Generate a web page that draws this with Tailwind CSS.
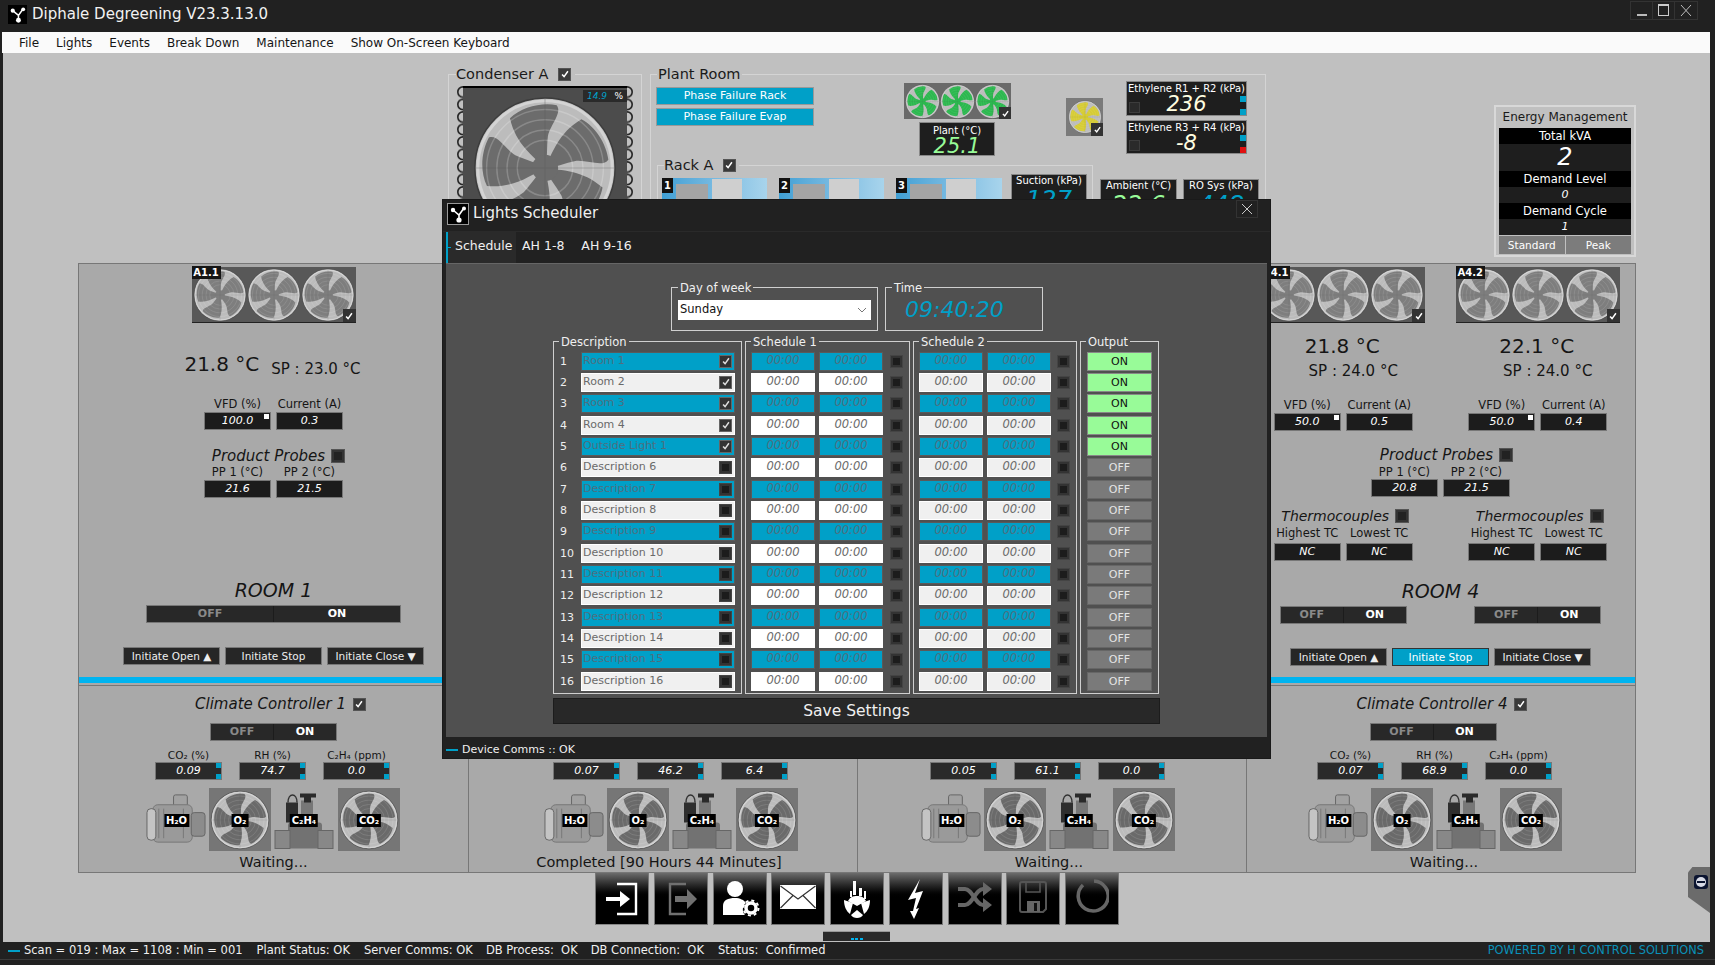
<!DOCTYPE html>
<html lang="en">
<head>
<meta charset="utf-8">
<title>Diphale Degreening</title>
<script src="https://cdn.jsdelivr.net/npm/@tailwindcss/browser@4"></script>
</head>
<body class="m-0 bg-[#212121] font-['DejaVu_Sans',sans-serif] overflow-hidden">

<!-- shared icons -->
<svg class="hidden">
  <symbol id="chk" viewBox="0 0 12 12"><path d="M2.5 6.5l2.4 2.6 4.6-6.4" fill="none" stroke="currentColor" stroke-width="1.8"/></symbol>
  <symbol id="logo" viewBox="0 0 20 20">
    <rect width="20" height="20" fill="#000"/>
    <path d="M5 6l6 5 5-7M11 11v5" stroke="#fff" stroke-width="1.6" fill="none"/>
    <circle cx="5" cy="6" r="2.2" fill="#fff"/><circle cx="16" cy="4.5" r="2" fill="#fff"/><circle cx="11" cy="16" r="2.6" fill="#fff"/>
  </symbol>
  <path id="blade" d="M50 50C42 42 30 34 26 16 34 8 48 5 58 7 62 12 54 20 52 28 51 36 52 44 50 50Z"/>
  <symbol id="fan" viewBox="0 0 100 100">
    <circle cx="50" cy="50" r="48" fill="#bcbcbc" stroke="#3c3c3c" stroke-width="1"/>
    <g fill="currentColor">
      <use href="#blade"/>
      <use href="#blade" transform="rotate(72 50 50)"/>
      <use href="#blade" transform="rotate(144 50 50)"/>
      <use href="#blade" transform="rotate(216 50 50)"/>
      <use href="#blade" transform="rotate(288 50 50)"/>
      <circle cx="50" cy="50" r="9"/>
    </g>
    <g fill="none" stroke="#fff" stroke-opacity=".2" stroke-width="1">
      <circle cx="50" cy="50" r="40"/><circle cx="50" cy="50" r="33"/><circle cx="50" cy="50" r="26"/><circle cx="50" cy="50" r="19"/>
    </g>
    <circle cx="50" cy="50" r="46" fill="none" stroke="#d4d4d4" stroke-width="2"/>
    <path d="M50 2V98M2 50H98" stroke="#555" stroke-opacity=".3" stroke-width=".8"/>
  </symbol>
  <symbol id="motor" viewBox="0 0 62 62">
    <rect x="28" y="6" width="14" height="12" rx="2" fill="#a2a2a2" stroke="#666"/>
    <rect x="7" y="16" width="40" height="38" rx="5" fill="#9a9a9a" stroke="#777"/>
    <rect x="1" y="20" width="9" height="32" rx="4" fill="#c4c4c4" stroke="#666"/>
    <rect x="46" y="24" width="14" height="24" rx="3" fill="#8c8c8c" stroke="#666"/>
    <path d="M13 20V50M18 20V50M38 20V50" stroke="#777"/>
  </symbol>
  <symbol id="valve" viewBox="0 0 60 62">
    <rect x="12" y="14" width="12" height="20" fill="#2e2e2e"/>
    <path d="M14 14c0-10 9-10 9 0" fill="none" stroke="#333" stroke-width="1.5"/>
    <rect x="27" y="12" width="12" height="24" fill="#777"/>
    <path d="M26 5H42V9H37V14H30V9H26Z" fill="#2a2a2a"/>
    <rect x="14" y="34" width="34" height="26" rx="3" fill="#727272"/>
    <rect x="1" y="42" width="15" height="18" fill="#888" stroke="#666"/>
    <rect x="44" y="42" width="15" height="18" fill="#888" stroke="#666"/>
  </symbol>
</svg>

<div class="w-[1715px] h-[965px] flex flex-col relative overflow-hidden">

  <!-- title bar -->
  <header class="h-[32px] flex items-center bg-[#212121] text-white relative">
    <svg class="w-[19px] h-[19px] ml-[8px] -mt-[3px]"><use href="#logo"/></svg>
    <span class="ml-[5px] -mt-[3px] text-[15px] leading-none text-[#f2f2f2]">Diphale Degreening V23.3.13.0</span>
    <div class="ml-auto mr-[17px] -mt-[12px] flex h-[19px] border border-[#333] text-[#bbb]">
      <span class="w-[22px] flex items-end justify-center pb-[3px] border-r border-[#333]"><span class="w-[10px] h-[2px] bg-[#bbb]"></span></span>
      <span class="w-[22px] flex items-center justify-center border-r border-[#333]"><span class="w-[11px] h-[12px] border border-[#ccc] border-t-2"></span></span>
      <span class="w-[22px] flex items-center justify-center">
        <svg class="w-[12px] h-[13px]" viewBox="0 0 12 13"><path d="M1 1L11 12M11 1L1 12" stroke="#bbb"/></svg>
      </span>
    </div>
  </header>

  <!-- menu -->
  <nav class="h-[21px] mx-[2px] mr-[5px] bg-[#fafafa] flex items-center gap-[17px] pl-[17px] text-[12px] text-[#151515]">
    <span>File</span><span>Lights</span><span>Events</span><span>Break Down</span><span>Maintenance</span><span>Show On-Screen Keyboard</span>
  </nav>

  <!-- main area -->
  <main class="flex-1 ml-[3px] mr-[5px] bg-[#c0c0c0] relative flex flex-col">

    <!-- top: condenser, plant room, energy -->
    <section class="h-[210px] flex items-start pt-[14px] pl-[445px] text-[#1a1a1a]">
      <fieldset class="w-[194px] h-[186px] border border-[#d4d4d4]">
        <legend class="ml-[7px] pr-[4px] flex items-center gap-[10px] text-[14.5px] leading-[14px]">
          Condenser A
          <span class="w-[13px] h-[13px] flex items-center justify-center bg-[#3a3a3a] border border-[#555] text-white"><svg class="w-[10px] h-[10px]"><use href="#chk"/></svg></span>
        </legend>
        <div class="relative w-[176px] h-[150px] ml-[8px] mt-[5px]">
          <svg class="absolute left-0 top-0" width="176" height="150">
            <defs><pattern id="scal" width="176" height="12.5" patternUnits="userSpaceOnUse">
              <circle cx="6" cy="6" r="5.2" fill="none" stroke="#222" stroke-width="1.6"/><circle cx="170" cy="6" r="5.2" fill="none" stroke="#222" stroke-width="1.6"/>
            </pattern></defs>
            <rect width="176" height="150" fill="url(#scal)"/>
          </svg>
          <div class="absolute left-[6px] top-0 w-[164px] h-[150px] bg-[#4c4c4c] border-t-2 border-black">
            <svg class="absolute left-[9px] top-[7px] w-[146px] h-[146px] text-[#6c6c6c]"><use href="#fan"/></svg>
            <div class="absolute right-0 top-[2px] w-[44px] h-[12px] bg-[#2a2a2a] flex items-center justify-between px-[4px] text-[9px] italic leading-none">
              <span class="text-[#00a0c8]">14.9</span><span class="text-white not-italic">%</span>
            </div>
          </div>
        </div>
      </fieldset>

      <fieldset class="w-[616px] h-[186px] ml-[8px] border border-[#d4d4d4]">
        <legend class="ml-[6px] px-[1px] text-[14.5px] leading-[14px] pr-[2px]">Plant Room</legend>
        <div class="h-[77px] flex items-start">
          <div class="ml-[5px] mt-[6px] w-[158px] flex flex-col gap-[3px] text-[11px] text-white text-center">
            <div class="h-[18px] bg-[#00a0c8] border border-[#999] leading-[16px]">Phase Failure Rack</div>
            <div class="h-[18px] bg-[#00a0c8] border border-[#999] leading-[16px]">Phase Failure Evap</div>
          </div>
          <div class="ml-[90px] mt-[2px] w-[107px]">
            <div class="relative h-[36px] bg-[#6a6a6a] flex items-center justify-center text-[#2cb84f]">
              <svg class="w-[35px] h-[35px]"><use href="#fan"/></svg><svg class="w-[35px] h-[35px]"><use href="#fan"/></svg><svg class="w-[35px] h-[35px]"><use href="#fan"/></svg>
              <span class="absolute right-0 bottom-0 w-[12px] h-[12px] flex items-center justify-center bg-[#333] text-white"><svg class="w-[9px] h-[9px]"><use href="#chk"/></svg></span>
            </div>
            <div class="w-[76px] h-[34px] ml-[15px] mt-[3px] bg-[#1e1e1e] border border-[#888] text-center text-white text-[10px] leading-[11px] pt-[2px]">
              Plant (°C)
              <div class="text-[21px] leading-[20px] italic text-[#98fb98]">25.1</div>
            </div>
          </div>
          <div class="relative ml-[55px] mt-[17px] w-[37px] h-[38px] bg-[#7a7a7a] flex items-center justify-center text-[#d6cc36]">
            <svg class="w-[34px] h-[36px]"><use href="#fan"/></svg>
            <span class="absolute right-0 bottom-0 w-[12px] h-[13px] flex items-center justify-center bg-[#333] text-white"><svg class="w-[9px] h-[9px]"><use href="#chk"/></svg></span>
          </div>
          <div class="ml-[23px] w-[121px] flex flex-col gap-[4px]">
            <div class="relative h-[35px] bg-[#1e1e1e] border border-[#888] text-center text-white text-[10px] leading-[11px] pt-[1px]">
              Ethylene R1 + R2 (kPa)
              <div class="text-[21px] leading-[21px] italic text-[#fffde0]">236</div>
              <span class="absolute left-[2px] bottom-[2px] w-[11px] h-[11px] bg-[#2a2a2a] border border-[#3c3c3c]"></span>
              <span class="absolute right-0 top-[14px] w-[6px] h-[6px] bg-[#00a0c8]"></span>
              <span class="absolute right-0 bottom-0 w-[6px] h-[6px] bg-[#00a0c8]"></span>
            </div>
            <div class="relative h-[34px] bg-[#1e1e1e] border border-[#888] text-center text-white text-[10px] leading-[11px] pt-[1px]">
              Ethylene R3 + R4 (kPa)
              <div class="text-[21px] leading-[21px] italic text-[#fffde0]">-8</div>
              <span class="absolute left-[2px] bottom-[2px] w-[11px] h-[11px] bg-[#2a2a2a] border border-[#3c3c3c]"></span>
              <span class="absolute right-0 top-[14px] w-[6px] h-[6px] bg-[#00a0c8]"></span>
              <span class="absolute right-0 bottom-0 w-[6px] h-[6px] bg-[#e01010]"></span>
            </div>
          </div>
        </div>
        <div class="flex items-start">
          <fieldset class="ml-[6px] w-[436px] h-[90px] border border-[#d4d4d4]">
            <legend class="ml-[6px] pr-[3px] flex items-center gap-[9px] text-[14.5px] leading-[14px]">
              Rack A
              <span class="w-[13px] h-[13px] flex items-center justify-center bg-[#3a3a3a] border border-[#555] text-white"><svg class="w-[10px] h-[10px]"><use href="#chk"/></svg></span>
            </legend>
            <div class="flex items-start pl-[4px]">
              <div class="relative w-[105px] h-[60px] mt-[6px] bg-linear-to-r from-[#3f9fd4] to-[#a8d4ec]">
                <span class="absolute left-0 top-0 w-[11px] h-[15px] bg-[#111] text-white text-[10px] font-bold text-center">1</span>
                <span class="absolute left-[14px] top-[6px] w-[32px] h-[16px] bg-[#a4a4a4]"></span>
                <span class="absolute left-[50px] top-[1px] w-[30px] h-[20px] bg-[#cfcfcf]"></span>
              </div>
              <div class="relative w-[105px] h-[60px] mt-[6px] ml-[12px] bg-linear-to-r from-[#3f9fd4] to-[#a8d4ec]">
                <span class="absolute left-0 top-0 w-[11px] h-[15px] bg-[#111] text-white text-[10px] font-bold text-center">2</span>
                <span class="absolute left-[14px] top-[6px] w-[32px] h-[16px] bg-[#a4a4a4]"></span>
                <span class="absolute left-[50px] top-[1px] w-[30px] h-[20px] bg-[#cfcfcf]"></span>
              </div>
              <div class="relative w-[106px] h-[60px] mt-[6px] ml-[12px] bg-linear-to-r from-[#3f9fd4] to-[#a8d4ec]">
                <span class="absolute left-0 top-0 w-[11px] h-[15px] bg-[#111] text-white text-[10px] font-bold text-center">3</span>
                <span class="absolute left-[14px] top-[6px] w-[32px] h-[16px] bg-[#a4a4a4]"></span>
                <span class="absolute left-[50px] top-[1px] w-[30px] h-[20px] bg-[#cfcfcf]"></span>
              </div>
              <div class="w-[76px] h-[36px] ml-[9px] mt-[2px] bg-[#1e1e1e] border border-[#888] text-center text-white text-[10px] leading-[11px]">
                Suction (kPa)
                <div class="text-[24px] leading-[28px] italic text-[#00a0c8]">127</div>
              </div>
            </div>
          </fieldset>
          <div class="w-[77px] h-[36px] ml-[7px] mt-[21px] bg-[#1e1e1e] border border-[#888] text-center text-white text-[10px] leading-[11px]">
            Ambient (°C)
            <div class="text-[24px] leading-[28px] italic text-[#98fb98]">22.6</div>
          </div>
          <div class="w-[76px] h-[36px] ml-[6px] mt-[21px] bg-[#1e1e1e] border border-[#888] text-center text-white text-[10px] leading-[11px]">
            RO Sys (kPa)
            <div class="text-[24px] leading-[28px] italic text-[#00a0c8]">448</div>
          </div>
        </div>
      </fieldset>

      <div class="ml-[228px] mt-[38px] w-[142px] h-[152px] border-2 border-[#d8d8d8] px-[3px] text-center text-white">
        <div class="h-[21px] text-[12px] leading-[20px] text-[#1a1a1a]">Energy Management</div>
        <div class="h-[16px] bg-black text-[11.5px] leading-[16px]">Total kVA</div>
        <div class="h-[27px] bg-[#1e1e1e] text-[24px] leading-[27px] italic">2</div>
        <div class="h-[16px] bg-black text-[11.5px] leading-[16px]">Demand Level</div>
        <div class="h-[16px] bg-[#1e1e1e] text-[11px] leading-[16px] italic">0</div>
        <div class="h-[16px] bg-black text-[11.5px] leading-[16px]">Demand Cycle</div>
        <div class="h-[16px] bg-[#1e1e1e] text-[11px] leading-[16px] italic">1</div>
        <div class="h-[18px] mt-[1px] flex gap-[1px] text-[10.5px] leading-[18px]">
          <span class="flex-1 bg-[#7c7c7c]">Standard</span><span class="flex-1 bg-[#7c7c7c]">Peak</span>
        </div>
      </div>
    </section>

    <!-- rooms -->
    <section class="ml-[75px] w-[1558px] grid grid-cols-4 h-[412px] border-t border-l border-r border-[#777] bg-[#a9a9a9] text-[#151515]">
      <!-- room 1 -->
      <div class="flex flex-col items-center">
        <div class="relative w-[164px] h-[56px] mt-[3px] bg-[#585858] border-b border-[#222] flex items-center justify-center text-[#7e7e7e]">
          <svg class="w-[54px] h-[54px]"><use href="#fan"/></svg><svg class="w-[54px] h-[54px]"><use href="#fan"/></svg><svg class="w-[54px] h-[54px]"><use href="#fan"/></svg>
          <span class="absolute left-0 -top-[1px] w-[29px] h-[13px] bg-[#151515] text-white text-[10px] font-bold leading-[13px] text-center">A1.1</span>
          <span class="absolute right-0 bottom-0 w-[13px] h-[13px] flex items-center justify-center bg-[#333] text-white"><svg class="w-[10px] h-[10px]"><use href="#chk"/></svg></span>
        </div>
        <div class="mt-[29px] flex items-end gap-[12px] ml-[-2px]">
          <span class="text-[20px] leading-[24px]">21.8 °C</span>
          <span class="text-[15px] leading-[20px] mb-[-3px]">SP : 23.0 °C</span>
        </div>
        <div class="mt-[21px] flex gap-[5px] text-center text-[11.5px] leading-[14px]">
          <div class="w-[67px]">VFD (%)</div><div class="w-[67px]">Current (A)</div>
        </div>
        <div class="mt-[1px] flex gap-[5px] text-white italic text-[11px] text-center">
          <div class="relative w-[67px] h-[18px] bg-[#1c1c1c] border border-[#777] leading-[16px]">100.0<span class="absolute right-[1px] top-[1px] w-[5px] h-[5px] bg-white"></span></div>
          <div class="w-[67px] h-[18px] bg-[#1c1c1c] border border-[#777] leading-[16px]">0.3</div>
        </div>
        <div class="mt-[18px] flex items-center gap-[6px] ml-[10px]">
          <span class="text-[15px] leading-[16px] italic">Product Probes</span>
          <span class="w-[14px] h-[14px] flex items-center justify-center bg-[#333] border border-[#555]"><span class="w-[8px] h-[8px] bg-[#222]"></span></span>
        </div>
        <div class="mt-[1px] flex gap-[5px] text-center text-[11.5px] leading-[14px]">
          <div class="w-[67px]">PP 1 (°C)</div><div class="w-[67px]">PP 2 (°C)</div>
        </div>
        <div class="mt-[1px] flex gap-[5px] text-white italic text-[11px] text-center">
          <div class="w-[67px] h-[18px] bg-[#1c1c1c] border border-[#777] leading-[16px]">21.6</div>
          <div class="w-[67px] h-[18px] bg-[#1c1c1c] border border-[#777] leading-[16px]">21.5</div>
        </div>
        <div class="mt-[80px] text-[19px] leading-[24px] italic">ROOM 1</div>
        <div class="mt-[3px] flex w-[255px] h-[18px] bg-[#282828] border border-[#777] text-[11px] font-bold leading-[16px] text-center">
          <span class="flex-1 text-[#8a8a8a] border-r border-[#1c1c1c]">OFF</span><span class="flex-1 text-white">ON</span>
        </div>
        <div class="mt-[24px] flex gap-[5px] text-[10.5px] leading-[16px] text-[#eee] text-center">
          <span class="w-[97px] h-[18px] bg-[#262626] border border-[#777]">Initiate Open ▲</span>
          <span class="w-[97px] h-[18px] bg-[#262626] border border-[#777]">Initiate Stop</span>
          <span class="w-[97px] h-[18px] bg-[#262626] border border-[#777]">Initiate Close ▼</span>
        </div>
      </div>
      <div></div>
      <div></div>
      <!-- room 4 -->
      <div class="flex flex-col">
        <div class="grid grid-cols-2">
          <div class="flex flex-col items-center">
            <div class="relative w-[164px] h-[56px] mt-[3px] bg-[#585858] border-b border-[#222] flex items-center justify-center text-[#7e7e7e]">
              <svg class="w-[54px] h-[54px]"><use href="#fan"/></svg><svg class="w-[54px] h-[54px]"><use href="#fan"/></svg><svg class="w-[54px] h-[54px]"><use href="#fan"/></svg>
              <span class="absolute left-0 -top-[1px] w-[29px] h-[13px] bg-[#151515] text-white text-[10px] font-bold leading-[13px] text-center">A4.1</span>
              <span class="absolute right-0 bottom-0 w-[13px] h-[13px] flex items-center justify-center bg-[#333] text-white"><svg class="w-[10px] h-[10px]"><use href="#chk"/></svg></span>
            </div>
            <div class="mt-[11px] text-[20px] leading-[24px] ml-[-2px]">21.8 °C</div>
            <div class="mt-[2px] text-[15px] leading-[22px] ml-[20px]">SP : 24.0 °C</div>
            <div class="mt-[16px] flex gap-[5px] text-center text-[11.5px] leading-[14px]">
              <div class="w-[67px]">VFD (%)</div><div class="w-[67px]">Current (A)</div>
            </div>
            <div class="mt-[1px] flex gap-[5px] text-white italic text-[11px] text-center">
              <div class="relative w-[67px] h-[18px] bg-[#1c1c1c] border border-[#777] leading-[16px]">50.0<span class="absolute right-[1px] top-[1px] w-[5px] h-[5px] bg-white"></span></div>
              <div class="w-[67px] h-[18px] bg-[#1c1c1c] border border-[#777] leading-[16px]">0.5</div>
            </div>
          </div>
          <div class="flex flex-col items-center">
            <div class="relative w-[164px] h-[56px] mt-[3px] bg-[#585858] border-b border-[#222] flex items-center justify-center text-[#7e7e7e]">
              <svg class="w-[54px] h-[54px]"><use href="#fan"/></svg><svg class="w-[54px] h-[54px]"><use href="#fan"/></svg><svg class="w-[54px] h-[54px]"><use href="#fan"/></svg>
              <span class="absolute left-0 -top-[1px] w-[29px] h-[13px] bg-[#151515] text-white text-[10px] font-bold leading-[13px] text-center">A4.2</span>
              <span class="absolute right-0 bottom-0 w-[13px] h-[13px] flex items-center justify-center bg-[#333] text-white"><svg class="w-[10px] h-[10px]"><use href="#chk"/></svg></span>
            </div>
            <div class="mt-[11px] text-[20px] leading-[24px] ml-[-2px]">22.1 °C</div>
            <div class="mt-[2px] text-[15px] leading-[22px] ml-[20px]">SP : 24.0 °C</div>
            <div class="mt-[16px] flex gap-[5px] text-center text-[11.5px] leading-[14px]">
              <div class="w-[67px]">VFD (%)</div><div class="w-[67px]">Current (A)</div>
            </div>
            <div class="mt-[1px] flex gap-[5px] text-white italic text-[11px] text-center">
              <div class="relative w-[67px] h-[18px] bg-[#1c1c1c] border border-[#777] leading-[16px]">50.0<span class="absolute right-[1px] top-[1px] w-[5px] h-[5px] bg-white"></span></div>
              <div class="w-[67px] h-[18px] bg-[#1c1c1c] border border-[#777] leading-[16px]">0.4</div>
            </div>
          </div>
        </div>
        <div class="flex flex-col items-center">
          <div class="mt-[16px] flex items-center gap-[6px] ml-[12px]">
            <span class="text-[15px] leading-[16px] italic">Product Probes</span>
            <span class="w-[14px] h-[14px] flex items-center justify-center bg-[#333] border border-[#555]"><span class="w-[8px] h-[8px] bg-[#222]"></span></span>
          </div>
          <div class="mt-[2px] flex gap-[5px] text-center text-[11.5px] leading-[14px]">
            <div class="w-[67px]">PP 1 (°C)</div><div class="w-[67px]">PP 2 (°C)</div>
          </div>
          <div class="flex gap-[5px] text-white italic text-[11px] text-center">
            <div class="w-[67px] h-[18px] bg-[#1c1c1c] border border-[#777] leading-[16px]">20.8</div>
            <div class="w-[67px] h-[18px] bg-[#1c1c1c] border border-[#777] leading-[16px]">21.5</div>
          </div>
        </div>
        <div class="grid grid-cols-2 mt-[11px]">
          <div class="flex flex-col items-center">
            <div class="flex items-center gap-[6px] ml-[4px]">
              <span class="text-[14px] leading-[16px] italic">Thermocouples</span>
              <span class="w-[14px] h-[14px] flex items-center justify-center bg-[#333] border border-[#555]"><span class="w-[8px] h-[8px] bg-[#222]"></span></span>
            </div>
            <div class="mt-[2px] flex gap-[5px] text-center text-[11.5px] leading-[14px] whitespace-nowrap">
              <div class="w-[67px]">Highest TC</div><div class="w-[67px]">Lowest TC</div>
            </div>
            <div class="mt-[3px] flex gap-[5px] text-white italic text-[11px] text-center">
              <div class="w-[67px] h-[18px] bg-[#1c1c1c] border border-[#777] leading-[16px]">NC</div>
              <div class="w-[67px] h-[18px] bg-[#1c1c1c] border border-[#777] leading-[16px]">NC</div>
            </div>
          </div>
          <div class="flex flex-col items-center">
            <div class="flex items-center gap-[6px] ml-[4px]">
              <span class="text-[14px] leading-[16px] italic">Thermocouples</span>
              <span class="w-[14px] h-[14px] flex items-center justify-center bg-[#333] border border-[#555]"><span class="w-[8px] h-[8px] bg-[#222]"></span></span>
            </div>
            <div class="mt-[2px] flex gap-[5px] text-center text-[11.5px] leading-[14px] whitespace-nowrap">
              <div class="w-[67px]">Highest TC</div><div class="w-[67px]">Lowest TC</div>
            </div>
            <div class="mt-[3px] flex gap-[5px] text-white italic text-[11px] text-center">
              <div class="w-[67px] h-[18px] bg-[#1c1c1c] border border-[#777] leading-[16px]">NC</div>
              <div class="w-[67px] h-[18px] bg-[#1c1c1c] border border-[#777] leading-[16px]">NC</div>
            </div>
          </div>
        </div>
        <div class="mt-[18px] text-[19px] leading-[24px] italic text-center">ROOM 4</div>
        <div class="grid grid-cols-2 mt-[3px] justify-items-center text-[11px] font-bold leading-[16px] text-center">
          <div class="flex w-[127px] h-[18px] bg-[#282828] border border-[#777]"><span class="flex-1 text-[#8a8a8a] border-r border-[#1c1c1c]">OFF</span><span class="flex-1 text-white">ON</span></div>
          <div class="flex w-[127px] h-[18px] bg-[#282828] border border-[#777]"><span class="flex-1 text-[#8a8a8a] border-r border-[#1c1c1c]">OFF</span><span class="flex-1 text-white">ON</span></div>
        </div>
        <div class="mt-[24px] flex justify-center gap-[5px] text-[10.5px] leading-[16px] text-[#eee] text-center">
          <span class="w-[97px] h-[18px] bg-[#262626] border border-[#777]">Initiate Open ▲</span>
          <span class="w-[97px] h-[18px] bg-[#00a0c8] border border-[#333] text-white">Initiate Stop</span>
          <span class="w-[97px] h-[18px] bg-[#262626] border border-[#777]">Initiate Close ▼</span>
        </div>
      </div>
    </section>
    <div class="ml-[75px] w-[1558px] h-[10px] py-[2px] bg-[#a9a9a9] border-x border-[#777]"><div class="h-[6px] bg-[#00b4f0]"></div></div>

    <!-- climate controllers, filled in by the script below -->
    <section id="climate" class="ml-[75px] w-[1558px] h-[188px] grid grid-cols-4 bg-[#a9a9a9] border border-[#777] text-[#151515]"></section>

    <!-- toolbar -->
    <div class="ml-[592px] -mt-[1px] flex gap-[4.75px] relative">
      <div class="w-[54px] h-[53px] bg-linear-to-b from-[#6c6c6c] via-black via-50% to-black border border-[#777] border-b-[#888] flex items-center justify-center">
        <svg class="w-[40px] h-[40px]" viewBox="0 0 40 40"><path d="M15 5H34V35H15" fill="none" stroke="#fff" stroke-width="2.4"/><path d="M4 18H18V12L28 20 18 28V22H4Z" fill="#fff"/></svg>
      </div>
      <div class="w-[54px] h-[53px] bg-linear-to-b from-[#6c6c6c] via-black via-50% to-black border border-[#777] flex items-center justify-center">
        <svg class="w-[40px] h-[40px]" viewBox="0 0 40 40"><path d="M25 5H9V35H25" fill="none" stroke="#707070" stroke-width="2.4"/><path d="M14 17H26V10L36 20 26 30V23H14Z" fill="#707070"/></svg>
      </div>
      <div class="w-[54px] h-[53px] bg-linear-to-b from-[#6c6c6c] via-black via-50% to-black border border-[#777] flex items-center justify-center">
        <svg class="w-[44px] h-[44px]" viewBox="0 0 44 44"><circle cx="17" cy="12" r="8" fill="#fff"/><path d="M5 38V29C5 23 10 21 17 21 22 21 26 23 28 26 24 29 24 35 27 38Z" fill="#fff"/><circle cx="33" cy="31" r="5" fill="none" stroke="#fff" stroke-width="3.5"/><circle cx="33" cy="31" r="7.5" fill="none" stroke="#fff" stroke-width="2" stroke-dasharray="3 2.9"/></svg>
      </div>
      <div class="w-[54px] h-[53px] bg-linear-to-b from-[#6c6c6c] via-black via-50% to-black border border-[#777] flex items-center justify-center">
        <svg class="w-[36px] h-[24px] mb-[3px]" viewBox="0 0 36 24"><rect width="36" height="24" fill="#fff"/><path d="M0.5 1L18 14 35.5 1M0.5 23L13 10.5M35.5 23L23 10.5" fill="none" stroke="#333" stroke-width="1.2"/></svg>
      </div>
      <div class="w-[54px] h-[53px] bg-linear-to-b from-[#6c6c6c] via-black via-50% to-black border border-[#777] flex items-center justify-center">
        <svg class="w-[30px] h-[40px]" viewBox="0 0 30 40"><path d="M11 2h3v14h-3zM17 9h3v8h-3zM8 12h2v6H8zM22 12h2v8h-2z" fill="#fff"/><path d="M15 27L6 22C8 18 11 17 15 17 19 17 22 18 24 22Z" fill="#fff"/><path d="M2 23L11 26 8 37C4 34 2 29 2 23ZM28 23L19 26 22 37C26 34 28 29 28 23Z" fill="#fff" transform="translate(0 -2)"/><path d="M9 33L15 28 21 33C19 37 11 37 9 33Z" fill="#fff" transform="translate(0 3)"/></svg>
      </div>
      <div class="w-[54px] h-[53px] bg-linear-to-b from-[#6c6c6c] via-black via-50% to-black border border-[#777] flex items-center justify-center">
        <svg class="w-[20px] h-[42px]" viewBox="0 0 20 42"><path d="M14 1L2 22 10 20 7 33 4 33 8 41 13 30 10 31 17 13 9 15Z" fill="#fff"/></svg>
      </div>
      <div class="w-[54px] h-[53px] bg-linear-to-b from-[#6c6c6c] via-black via-50% to-black border border-[#777] flex items-center justify-center">
        <svg class="w-[34px] h-[32px] mb-[3px]" viewBox="0 0 34 32"><path d="M0 8H7C14 8 18 24 25 24H27M0 24H7C14 24 18 8 25 8H27" fill="none" stroke="#666" stroke-width="4"/><path d="M25 1L34 8 25 15ZM25 17L34 24 25 31Z" fill="#666"/></svg>
      </div>
      <div class="w-[54px] h-[53px] bg-linear-to-b from-[#6c6c6c] via-black via-50% to-black border border-[#777] flex items-center justify-center">
        <svg class="w-[28px] h-[32px] mb-[3px]" viewBox="0 0 28 32"><path d="M3 1H25Q27 1 27 3V28L24 31H3Q1 31 1 29V3Q1 1 3 1Z" fill="none" stroke="#555" stroke-width="2"/><path d="M7 2V11H21V2" fill="none" stroke="#555" stroke-width="1.6"/><rect x="8" y="20" width="13" height="11" fill="#666"/><rect x="15" y="22" width="3" height="8" fill="#111"/></svg>
      </div>
      <div class="w-[54px] h-[53px] bg-linear-to-b from-[#6c6c6c] via-black via-50% to-black border border-[#777] flex items-center justify-center">
        <svg class="w-[34px] h-[36px] mb-[3px]" viewBox="0 0 34 36"><path d="M19 2A15 15 0 1 1 8 6" fill="none" stroke="#666" stroke-width="3.6"/></svg>
      </div>
    </div>
    <div class="ml-[820px] mt-[6px] w-[67px] h-[10px] bg-[#2a2a2a] border-t border-[#999] flex items-end justify-center gap-[1.5px] pb-[1px]">
      <span class="w-[3px] h-[2px] bg-[#00b4f0]"></span><span class="w-[3px] h-[2px] bg-[#00b4f0]"></span><span class="w-[3px] h-[2px] bg-[#00b4f0]"></span>
    </div>

    <!-- remote-support tab at the window edge -->
    <div class="absolute right-0 top-[814px] w-[22px] h-[46px] bg-[#6b6b6b] [clip-path:polygon(20%_0,100%_0,100%_100%,0_65%,0_12%)]">
      <span class="absolute left-[6px] top-[8px] w-[14px] h-[14px] rounded-[3px] bg-[#0b1430] flex items-center justify-center">
        <span class="w-[10px] h-[10px] rounded-full bg-[#d8dbe6] flex items-center justify-center"><span class="w-[8px] h-[2px] bg-[#0b1430]"></span></span>
      </span>
    </div>

    <!-- Lights Scheduler dialog, sits over the main view -->
    <div class="absolute left-[440px] top-[147px] w-[827px] h-[558px] bg-[#212121] flex flex-col shadow-[0_0_0_1px_#1a1a1a]">
      <div class="h-[32px] flex items-center relative border-b border-[#2a2a2a]">
        <span class="ml-[4px] -mt-[3px] w-[22px] h-[22px] border border-[#999] flex"><svg class="w-[20px] h-[20px]"><use href="#logo"/></svg></span>
        <span class="ml-[4px] -mt-[4px] text-[15px] text-[#f0f0f0]">Lights Scheduler</span>
        <span class="absolute left-[793px] top-0 w-[22px] h-[18px] border border-[#333] flex items-center justify-center">
          <svg class="w-[12px] h-[12px]" viewBox="0 0 12 12"><path d="M1 1L11 11M11 1L1 11" stroke="#c8c8c8"/></svg>
        </span>
      </div>
      <div class="h-[31px] flex items-stretch pl-[3px] text-[12.5px] text-[#f0f0f0]">
        <span class="relative w-[70px] bg-[#2a2a2a] border-l-2 border-[#00a0c8] flex items-center pl-[7px] pb-[2px]"><span class="absolute left-0 top-[15px] w-[3px] h-px bg-[#00a0c8]"></span>Schedule</span>
        <span class="ml-[6px] flex items-center pb-[2px]">AH 1-8</span>
        <span class="ml-[17px] flex items-center pb-[2px]">AH 9-16</span>
      </div>
      <div class="mx-[3px] h-[477px] bg-[#505050] border-t border-[#666] pl-[107px] pt-[17px]">
        <div class="flex ml-[118px]">
          <fieldset class="w-[207px] h-[50px] border border-[#cfcfcf]">
            <legend class="ml-[6px] px-[2px] text-[11.5px] leading-[14px] text-[#f0f0f0]">Day of week</legend>
            <div class="mx-[6px] mt-[5px] h-[20px] bg-white flex items-center justify-between pl-[2px] pr-[4px] text-[11.5px] text-[#111]">
              Sunday
              <svg class="w-[10px] h-[6px]" viewBox="0 0 10 6"><path d="M1 1L5 5 9 1" fill="none" stroke="#777"/></svg>
            </div>
          </fieldset>
          <fieldset class="w-[158px] h-[50px] ml-[7px] border border-[#cfcfcf]">
            <legend class="ml-[6px] px-[2px] text-[11.5px] leading-[14px] text-[#f0f0f0]">Time</legend>
            <div class="mt-[1px] pl-[19px] text-[22px] leading-[28px] italic text-[#00a0c8]">09:40:20</div>
          </fieldset>
        </div>
        <div class="flex gap-[3px] mt-[4px] text-[#f0f0f0]">
          <fieldset class="w-[189px] h-[359px] border border-[#cfcfcf] pt-[3px]">
            <legend class="ml-[5px] px-[2px] text-[11.5px] leading-[14px]">Description</legend>
            <div id="desc"></div>
          </fieldset>
          <fieldset class="w-[165px] h-[359px] border border-[#cfcfcf] pt-[3px]">
            <legend class="ml-[5px] px-[2px] text-[11.5px] leading-[14px]">Schedule 1</legend>
            <div id="s1"></div>
          </fieldset>
          <fieldset class="w-[164px] h-[359px] border border-[#cfcfcf] pt-[3px]">
            <legend class="ml-[5px] px-[2px] text-[11.5px] leading-[14px]">Schedule 2</legend>
            <div id="s2"></div>
          </fieldset>
          <fieldset class="w-[79px] h-[359px] border border-[#cfcfcf] pt-[3px]">
            <legend class="ml-[5px] px-[2px] text-[11.5px] leading-[14px]">Output</legend>
            <div id="out"></div>
          </fieldset>
        </div>
        <div class="mt-[4px] w-[607px] h-[26px] bg-[#282828] border border-[#1c1c1c] text-center text-[15.5px] leading-[24px] text-[#f0f0f0]">Save Settings</div>
      </div>
      <div class="flex-1 flex items-center pl-[3px] pt-[5px] text-[11px] text-[#f0f0f0]">
        <span class="w-[12px] h-[2px] bg-[#00a0c8] mr-[4px]"></span>Device Comms :: OK
      </div>
    </div>
  </main>

  <!-- status bar -->
  <footer class="h-[17px] ml-[3px] mr-[0px] bg-[#212121] text-[#f0f0f0] text-[11.5px] flex items-center relative whitespace-nowrap">
    <span class="ml-[5px] w-[12px] h-[2px] bg-[#00a0c8]"></span>
    <span class="ml-[4px]">Scan = 019 : Max = 1108 : Min = 001</span>
    <span class="ml-[14px]">Plant Status: OK</span>
    <span class="ml-[14px]">Server Comms: OK</span>
    <span class="ml-[13px]">DB Process:&nbsp; OK</span>
    <span class="ml-[13px]">DB Connection:&nbsp; OK</span>
    <span class="ml-[14px]">Status:&nbsp; Confirmed</span>
    <span class="ml-auto mr-[11px] text-[11.4px] text-[#0a90b8]">POWERED BY H CONTROL SOLUTIONS</span>
  </footer>
  <div class="h-[6px] bg-[#212121] border-t border-[#3a3a3a]"></div>
</div>

<script>
  // schedule table rows
  var chkOn = '<span class="w-[13px] h-[13px] flex items-center justify-center bg-[#333] border border-[#666] text-[#ddd] shrink-0"><svg class="w-[10px] h-[10px]"><use href="#chk"/></svg></span>';
  var chkOff = '<span class="w-[13px] h-[13px] flex items-center justify-center bg-[#333] border border-[#444] shrink-0"><span class="w-[7px] h-[7px] bg-[#1c1c1c]"></span></span>';
  var names = ['Room 1', 'Room 2', 'Room 3', 'Room 4', 'Outside Light 1'];
  var desc = '', s1 = '', s2 = '', out = '';
  for (var i = 1; i <= 16; i++) {
    var blue = i % 2 == 1;
    var on = i <= 5;
    var name = names[i - 1] || 'Description ' + i;
    var descCls = blue ? 'bg-[#00a0c8] border-[#5a5a5a] text-[#4d6f80]' : 'bg-[#f0f0f0] border-white text-[#6a6a6a]';
    var s1Cls = blue ? 'bg-[#00a0c8] border-[#5a5a5a] text-[#4d6f80]' : 'bg-white border-white text-[#6a6a6a]';
    var s2Cls = blue ? 'bg-[#00a0c8] border-[#5a5a5a] text-[#4d6f80]' : 'bg-[#f0f0f0] border-white text-[#6a6a6a]';
    desc += '<div class="h-[21.33px] flex items-start pl-[6px] text-[11px]"><span class="w-[21px] leading-[19px] text-[#eee]">' + i + '</span>' +
      '<span class="w-[154px] h-[19px] flex items-center justify-between pl-[1px] pr-[2px] border leading-[15px] ' + descCls + '"><span class="-mt-[2px]">' + name + '</span>' + (on ? chkOn : chkOff) + '</span></div>';
    var times = '<span class="w-[64px] h-[19px] border text-center text-[11.5px] italic leading-[15px] S"><i>00:00</i></span>';
    s1 += '<div class="h-[21.33px] flex items-start gap-[4px] pl-[5px]">' + times.replace('S', s1Cls) + times.replace('S', s1Cls) + '<span class="ml-[3px] mt-[3px]">' + chkOff + '</span></div>';
    s2 += '<div class="h-[21.33px] flex items-start gap-[4px] pl-[5px]">' + times.replace('S', s2Cls) + times.replace('S', s2Cls) + '<span class="ml-[2px] mt-[3px]">' + chkOff + '</span></div>';
    out += '<div class="h-[21.33px] pl-[6px]"><div class="w-[65px] h-[19px] border text-center text-[11px] leading-[17px] ' +
      (on ? 'bg-[#98fb98] border-[#888] text-[#111]' : 'bg-[#7a7a7a] border-[#666] text-[#e4e4e4]') + '">' + (on ? 'ON' : 'OFF') + '</div></div>';
  }
  document.getElementById('desc').innerHTML = desc;
  document.getElementById('s1').innerHTML = s1;
  document.getElementById('s2').innerHTML = s2;
  document.getElementById('out').innerHTML = out;

  // climate controllers. Columns 2 and 3 sit behind the dialog down to the values,
  // so their heading and labels are left out.
  var cols = [
    { n: 1, pad: 'pl-[76px]', v: ['0.09', '74.7', '0.0'], foot: 'Waiting...', footCls: '', headCls: 'ml-[14px]', shown: true },
    { n: 2, pad: 'pl-[84px]', v: ['0.07', '46.2', '6.4'], foot: 'Completed [90 Hours 44 Minutes]', footCls: 'pr-[8px]', shown: false },
    { n: 3, pad: 'pl-[72px]', v: ['0.05', '61.1', '0.0'], foot: 'Waiting...', footCls: 'pr-[6px]', shown: false },
    { n: 4, pad: 'pl-[70px]', v: ['0.07', '68.9', '0.0'], foot: 'Waiting...', footCls: 'pl-[6px]', headCls: 'ml-[18px]', shown: true }
  ];
  var labels = ['CO₂ (%)', 'RH (%)', 'C₂H₄ (ppm)'];
  var tags = ['H₂O', 'O₂', 'C₂H₄', 'CO₂'];
  var tag = function (t) { return '<span class="absolute left-1/2 top-[26px] -translate-x-1/2 h-[13px] px-[2px] bg-black text-white text-[10px] font-bold leading-[13px] whitespace-nowrap">' + t + '</span>'; };
  document.getElementById('climate').innerHTML = cols.map(function (c, idx) {
    var vals = c.v.map(function (v, k) {
      return '<div class="w-[67px]"><div class="h-[14px] text-center text-[10.5px] leading-[14px] whitespace-nowrap">' + (c.shown ? labels[k] : '') + '</div>' +
        '<div class="relative h-[18px] bg-[#2a2a2a] border border-[#777] text-center text-white italic text-[11px] leading-[16px]">' + v +
        '<span class="absolute right-0 top-0 w-[5px] h-[5px] bg-[#00a0c8]"></span><span class="absolute right-0 bottom-0 w-[5px] h-[5px] bg-[#00a0c8]"></span></div></div>';
    }).join('');
    var center = idx == 3 ? 'items-center pr-[16px]' : 'items-center';
    var head = c.shown ?
      '<div class="mt-[10px] flex items-center gap-[7px] text-[15px] leading-[16px] italic whitespace-nowrap ' + c.headCls + '">Climate Controller ' + c.n +
        '<span class="w-[13px] h-[13px] flex items-center justify-center bg-[#3a3a3a] border border-[#555] text-white not-italic"><svg class="w-[10px] h-[10px]"><use href="#chk"/></svg></span></div>' +
      '<div class="mt-[11px] flex w-[127px] h-[18px] shrink-0 bg-[#282828] border border-[#777] text-[11px] font-bold leading-[16px] text-center"><span class="flex-1 text-[#8a8a8a] border-r border-[#1c1c1c]">OFF</span><span class="flex-1 text-white">ON</span></div>' : '';
    return '<div class="relative flex flex-col ' + (idx ? 'border-l border-[#777]' : '') + '">' +
      '<div class="flex flex-col ' + center + ' h-[48px]">' + head + '</div>' +
      '<div class="mt-[14px] flex gap-[17px] ' + c.pad + '">' + vals + '</div>' +
      '<div class="mt-[8px] flex gap-[2px] ' + c.pad + ' -ml-[9px]">' +
        '<div class="relative w-[61px] h-[63px]"><svg class="w-[61px] h-[63px]"><use href="#motor"/></svg>' + tag(tags[0]) + '</div>' +
        '<div class="relative w-[62px] h-[63px] bg-[#767676] flex items-center justify-center text-[#6a6a6a]"><svg class="w-[60px] h-[60px]"><use href="#fan"/></svg>' + tag(tags[1]) + '</div>' +
        '<div class="relative w-[60px] h-[63px] ml-[1px]"><svg class="w-[60px] h-[63px]"><use href="#valve"/></svg>' + tag(tags[2]) + '</div>' +
        '<div class="relative w-[62px] h-[63px] ml-[2px] bg-[#767676] flex items-center justify-center text-[#6a6a6a]"><svg class="w-[60px] h-[60px]"><use href="#fan"/></svg>' + tag(tags[3]) + '</div>' +
      '</div>' +
      '<div class="mt-[3px] text-center text-[14.5px] leading-[16px] whitespace-nowrap ' + c.footCls + '">' + c.foot + '</div>' +
    '</div>';
  }).join('');
</script>
</body>
</html>
